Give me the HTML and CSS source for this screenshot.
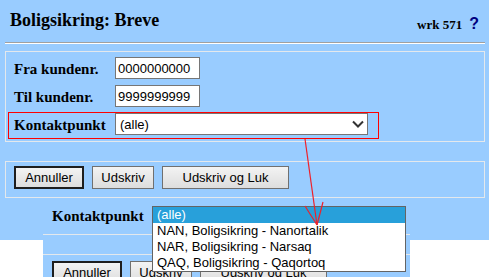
FILE: index.html
```html
<!DOCTYPE html>
<html>
<head>
    <meta charset="utf-8">
    <title>Boligsikring: Breve</title>
    <link rel="stylesheet" href="styles.css">
</head>
<body>
    <div class="page">

        <div class="top">
            <h1>Boligsikring: Breve</h1>
            <div class="wrk">wrk 571<span class="help">?</span></div>
        </div>
        <hr class="rule">

        <fieldset class="box params">
            <div class="row">
                <label>Fra kundenr.</label>
                <input type="text" class="field" value="0000000000">
            </div>
            <div class="row">
                <label>Til kundenr.</label>
                <input type="text" class="field" value="9999999999">
            </div>
            <div class="row mark">
                <label>Kontaktpunkt</label>
                <div class="select">
                    <span>(alle)</span>
                    <svg class="chev" width="12" height="8" viewBox="0 0 12 8"><polyline points="1,1.5 6,6.5 11,1.5" fill="none" stroke="#333" stroke-width="2"/></svg>
                </div>
            </div>
        </fieldset>

        <fieldset class="box actions">
            <button class="btn main">Annuller</button>
            <button class="btn">Udskriv</button>
            <button class="btn wide">Udskriv og Luk</button>
        </fieldset>

        <!-- cut-out of the page with the list opened -->
        <div class="lower">
            <div class="shot">
                <div class="shot-top">
                    <label>Kontaktpunkt</label>
                </div>
                <div class="shot-actions">
                    <button class="btn main">Annuller</button>
                    <button class="btn">Udskriv</button>
                    <button class="btn wide">Udskriv og Luk</button>
                </div>
            </div>
        </div>

        <ul class="popup">
            <li class="on">(alle)</li>
            <li>NAN, Boligsikring - Nanortalik</li>
            <li>NAR, Boligsikring - Narsaq</li>
            <li>QAQ, Boligsikring - Qaqortoq</li>
        </ul>

        <svg class="arrow" width="489" height="277" viewBox="0 0 489 277">
            <line x1="305" y1="139" x2="317" y2="225" stroke="#f0202a" stroke-width="1.2"/>
            <line x1="305" y1="206" x2="317" y2="225" stroke="#f0202a" stroke-width="1.2"/>
            <line x1="323" y1="202" x2="317" y2="225" stroke="#f0202a" stroke-width="1.2"/>
        </svg>
    </div>
</body>
</html>
```

FILE: styles.css
```css
body,html{
    margin: 0;
    padding: 0;
    background-color: #fff;
}
.page{
    position: relative;
    width: 489px;
    height: 277px;
    overflow: hidden;
    background-color: #99ccff;
    font-family: "Liberation Serif", "Times New Roman", serif;
    color: #000;
}
.top{
    height: 42px;
    display: flex;
    justify-content: space-between;
    padding: 0 10px;
    box-sizing: border-box;
}
h1{
    margin: 10px 0 0;
    font-size: 18px;
    line-height: 20px;
    font-weight: bold;
}
.wrk{
    margin-top: 16px;
    font-size: 13px;
    line-height: 16px;
    font-weight: bold;
}
.help{
    margin-left: 7px;
    font-family: "Liberation Sans", Arial, sans-serif;
    font-size: 16px;
    color: #000080;
}
.rule{
    margin: 0 4px 0 5px;
    height: 0;
    border: 0;
    border-top: 1px solid #a0a0a0;
    border-bottom: 1px solid #fff;
}
.box{
    margin: 0 4px 0 5px;
    border: 1px solid #e4e8ec;
    min-inline-size: 0;
}
.params{
    margin-top: 7px;
    padding: 5px 8px 2px;
}
.row{
    display: flex;
    height: 22px;
}
.row + .row{
    margin-top: 6px;
}
.row.mark{
    margin: 5px 0 0 -6px;
    width: 354px;
    height: 22px;
    padding: 0 10px 3px 5px;
    border: 1px solid #ff0000;
}
label{
    display: block;
    width: 101px;
    padding-top: 1px;
    font-size: 15px;
    line-height: 22px;
    font-weight: bold;
}
.field{
    box-sizing: border-box;
    width: 85px;
    height: 22px;
    margin: 0;
    padding: 0 2px;
    border: 1px solid #767676;
    font-family: "Liberation Sans", Arial, sans-serif;
    font-size: 13px;
    color: #000;
}
.select{
    box-sizing: border-box;
    width: 253px;
    height: 22px;
    display: flex;
    align-items: center;
    justify-content: space-between;
    padding: 0 3px 0 4px;
    background-color: #fff;
    border: 1px solid #767676;
    font-family: "Liberation Sans", Arial, sans-serif;
    font-size: 13px;
}
.actions{
    margin-top: 19px;
    padding: 4px 8px 8px;
    display: flex;
    gap: 8px;
}
.btn{
    box-sizing: border-box;
    height: 23px;
    width: 62px;
    margin: 0;
    padding: 0;
    border: 1px solid #707070;
    background: linear-gradient(#f3f3f3, #dddddd);
    font-family: "Liberation Sans", Arial, sans-serif;
    font-size: 13px;
    color: #000;
}
.btn.main{
    width: 70px;
    border: 2px solid #1e1e1e;
}
.btn.wide{
    width: 127px;
}
.lower{
    height: 79px;
    background: linear-gradient(#99ccff 42px, #fff 42px);
}
.shot{
    margin-left: 43px;
    width: 367px;
    height: 79px;
    overflow: hidden;
    background-color: #99ccff;
}
.shot-top{
    box-sizing: border-box;
    height: 37px;
    padding: 6px 0 0 9px;
    border-bottom: 1px solid #e4e8ec;
}
.shot-actions{
    margin-top: 19px;
    padding: 6px 0 0 9px;
    border-top: 1px solid #e4e8ec;
    display: flex;
    gap: 8px;
}
.popup{
    position: absolute;
    left: 152px;
    top: 206px;
    width: 252px;
    margin: 0;
    padding: 0;
    list-style: none;
    background-color: #fff;
    border: 1px solid #646464;
    font-family: "Liberation Sans", Arial, sans-serif;
    font-size: 13px;
}
.popup li{
    height: 16px;
    line-height: 16px;
    padding-left: 4px;
}
.popup li.on{
    background-color: #28a0da;
    color: #fff;
}
.arrow{
    position: absolute;
    left: 0;
    top: 0;
    pointer-events: none;
}
```
